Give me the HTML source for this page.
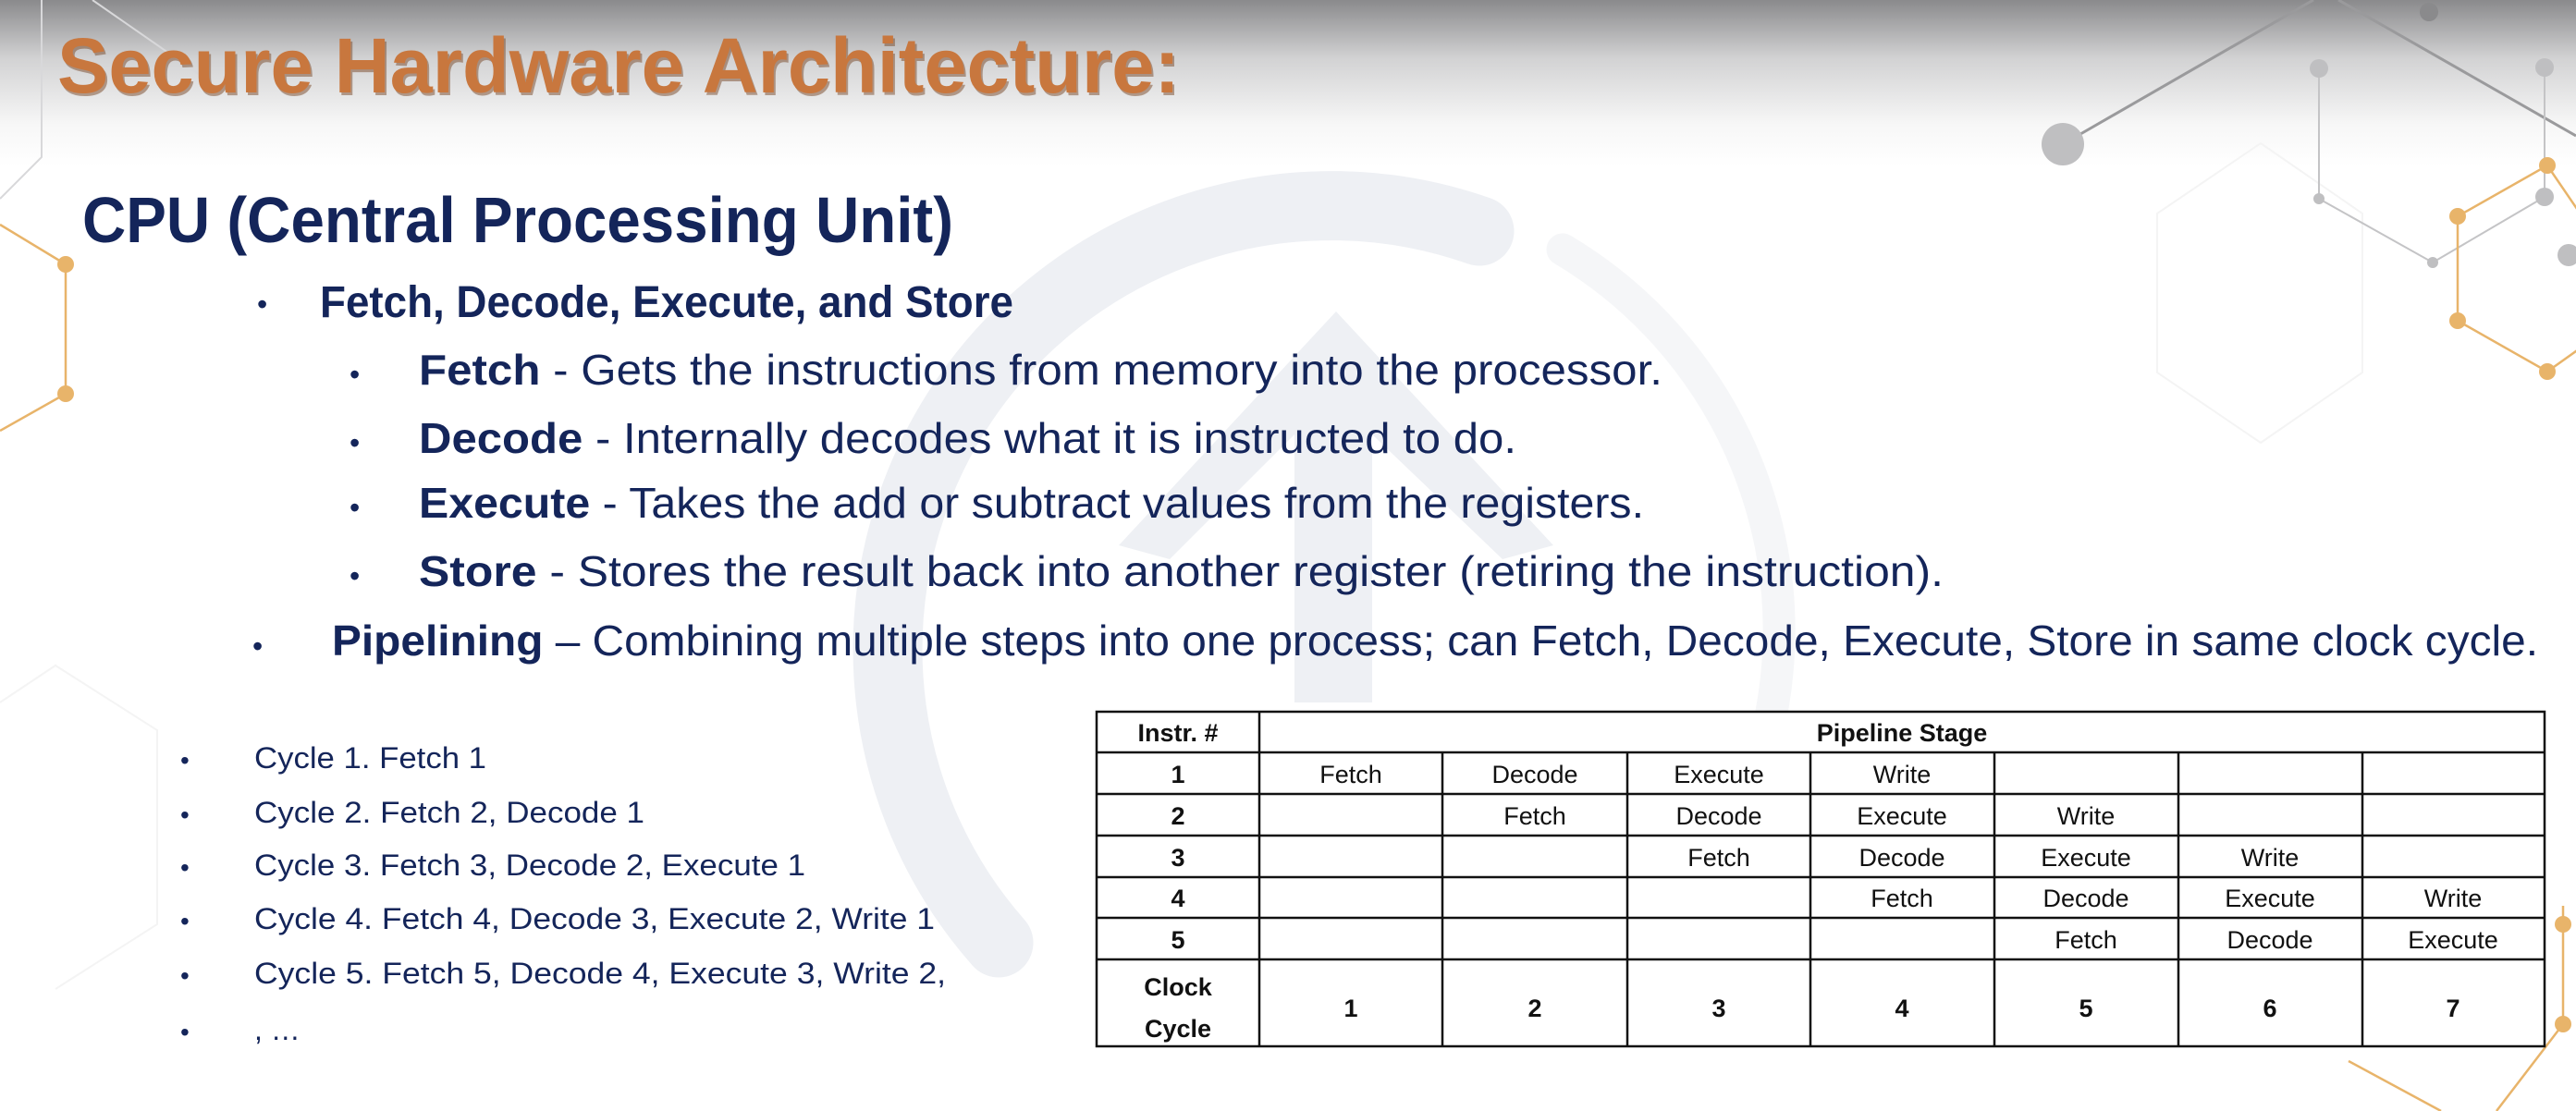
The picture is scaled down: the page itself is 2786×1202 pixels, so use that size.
<!DOCTYPE html>
<html><head><meta charset="utf-8"><style>
html,body{margin:0;padding:0;background:#fff;}
svg{display:block;}
text{font-family:"Liberation Sans",sans-serif;}
</style></head><body>
<svg width="2786" height="1202" viewBox="0 0 2786 1202" xmlns="http://www.w3.org/2000/svg">
<defs>
<linearGradient id="tg" x1="0" y1="0" x2="0" y2="1">
<stop offset="0" stop-color="#8a8a8c"/>
<stop offset="0.35" stop-color="#d2d2d3"/>
<stop offset="0.75" stop-color="#f7f7f7"/>
<stop offset="1" stop-color="#ffffff"/>
</linearGradient>
</defs>
<rect width="2786" height="1202" fill="#fff"/>
<rect width="2786" height="180" fill="url(#tg)"/>

<!-- watermark -->
<g fill="none" stroke="#eef0f4" stroke-linecap="round">
<path d="M1080 1020 A480 480 0 0 1 1600 250" stroke-width="75"/>
<path d="M1690 270 A480 480 0 0 1 1890 860" stroke-width="35" opacity="0.6"/>
</g>
<g fill="#eef0f4">
<polygon points="1445,337 1210,590 1265,605 1400,470 1400,760 1484,760 1484,470 1625,605 1680,590"/>
</g>

<!-- faint hexes -->
<g stroke="#f4f4f4" stroke-width="2" fill="none">
<path d="M2333 231 L2445 155 L2555 231 L2555 403 L2445 479 L2333 403 Z"/>
<path d="M0 760 L60 720 L170 790 L170 1000 L60 1070"/>
</g>

<!-- right top network -->
<g stroke="#9a9a9c" stroke-width="3" fill="none">
<line x1="2231" y1="156" x2="2502" y2="0"/>
<line x1="2529" y1="0" x2="2786" y2="147"/>
</g>
<g stroke="#c4c4c6" stroke-width="2" fill="none">
<polyline points="2508,74 2508,215 2631,284 2752,213 2752,73"/>
</g>
<g fill="#bfbfc1">
<circle cx="2231" cy="156" r="23"/>
<circle cx="2508" cy="74" r="10"/>
<circle cx="2752" cy="73" r="10"/>
<circle cx="2508" cy="215" r="6"/>
<circle cx="2631" cy="284" r="6"/>
<circle cx="2752" cy="213" r="10"/>
<circle cx="2778" cy="276" r="12"/>
<circle cx="2627" cy="13" r="10" fill="#8a8a8c"/>
</g>
<g stroke="#e8b46a" stroke-width="2.5" fill="none">
<polyline points="2800,245 2755,179 2658,234 2658,347 2755,402 2800,370"/>
<polyline points="0,243 71,286 71,426 0,466"/>
<polyline points="2772,980 2772,1108 2700,1202"/>
<polyline points="2540,1148 2640,1202"/>
</g>
<g fill="#e8b46a">
<circle cx="2755" cy="179" r="9"/><circle cx="2658" cy="234" r="9"/>
<circle cx="2658" cy="347" r="9"/><circle cx="2755" cy="402" r="9"/>
<circle cx="71" cy="286" r="9"/><circle cx="71" cy="426" r="9"/>
<circle cx="2772" cy="1000" r="9"/><circle cx="2772" cy="1108" r="9"/>
</g>
<g stroke="#d8d8da" stroke-width="2" fill="none">
<polyline points="45,0 45,170 0,215"/>
<polyline points="100,0 215,80"/>
</g>

<!-- Title -->
<text x="64" y="103" font-size="84" font-weight="bold" fill="#7a4a2a" opacity="0.5" textLength="1214" lengthAdjust="spacingAndGlyphs">Secure Hardware Architecture:</text>
<text x="62" y="100" font-size="84" font-weight="bold" fill="#c8773e" textLength="1214" lengthAdjust="spacingAndGlyphs">Secure Hardware Architecture:</text>

<g fill="#14255a">
<text x="89" y="262" font-size="70" font-weight="bold" textLength="942" lengthAdjust="spacingAndGlyphs">CPU (Central Processing Unit)</text>
<text x="278" y="340" font-size="32">•</text>
<text x="346" y="343" font-size="48" font-weight="bold" textLength="750" lengthAdjust="spacingAndGlyphs">Fetch, Decode, Execute, and Store</text>

<text x="378" y="416" font-size="32">•</text>
<text x="453" y="416" font-size="46" textLength="1345" lengthAdjust="spacingAndGlyphs"><tspan font-weight="bold">Fetch</tspan> - Gets the instructions from memory into the processor.</text>
<text x="378" y="490" font-size="32">•</text>
<text x="453" y="490" font-size="46" textLength="1187" lengthAdjust="spacingAndGlyphs"><tspan font-weight="bold">Decode</tspan> - Internally decodes what it is instructed to do.</text>
<text x="378" y="560" font-size="32">•</text>
<text x="453" y="560" font-size="46" textLength="1325" lengthAdjust="spacingAndGlyphs"><tspan font-weight="bold">Execute</tspan> - Takes the add or subtract values from the registers.</text>
<text x="378" y="634" font-size="32">•</text>
<text x="453" y="634" font-size="46" textLength="1649" lengthAdjust="spacingAndGlyphs"><tspan font-weight="bold">Store</tspan> -  Stores the result back into another register (retiring the instruction).</text>
<text x="273" y="710" font-size="32">•</text>
<text x="359" y="709" font-size="46" textLength="2386" lengthAdjust="spacingAndGlyphs"><tspan font-weight="bold">Pipelining</tspan> – Combining multiple steps into one process; can Fetch, Decode, Execute, Store in same clock cycle.</text>

<g font-size="32">
<text x="195" y="832" font-size="28">•</text>
<text x="275" y="831" textLength="251" lengthAdjust="spacingAndGlyphs">Cycle 1. Fetch 1</text>
<text x="195" y="891" font-size="28">•</text>
<text x="275" y="890" textLength="422" lengthAdjust="spacingAndGlyphs">Cycle 2. Fetch 2, Decode 1</text>
<text x="195" y="948" font-size="28">•</text>
<text x="275" y="947" textLength="596" lengthAdjust="spacingAndGlyphs">Cycle 3. Fetch 3, Decode 2, Execute 1</text>
<text x="195" y="1006" font-size="28">•</text>
<text x="275" y="1005" textLength="736" lengthAdjust="spacingAndGlyphs">Cycle 4. Fetch 4, Decode 3, Execute 2, Write 1</text>
<text x="195" y="1065" font-size="28">•</text>
<text x="275" y="1064" textLength="748" lengthAdjust="spacingAndGlyphs">Cycle 5. Fetch 5, Decode 4, Execute 3, Write 2,</text>
<text x="195" y="1126" font-size="28">•</text>
<text x="275" y="1125">, …</text>
</g>
</g>

<!-- Table -->
<rect x="1186" y="770" width="1566" height="362" fill="#fff"/>
<g stroke="#111" stroke-width="2.5" fill="none">
<rect x="1186" y="770" width="1566" height="362"/>
<line x1="1186" y1="814" x2="2752" y2="814"/>
<line x1="1186" y1="859" x2="2752" y2="859"/>
<line x1="1186" y1="904" x2="2752" y2="904"/>
<line x1="1186" y1="949" x2="2752" y2="949"/>
<line x1="1186" y1="993" x2="2752" y2="993"/>
<line x1="1186" y1="1038" x2="2752" y2="1038"/>
<line x1="1362" y1="770" x2="1362" y2="1132"/>
<line x1="1560" y1="814" x2="1560" y2="1132"/>
<line x1="1760" y1="814" x2="1760" y2="1132"/>
<line x1="1958" y1="814" x2="1958" y2="1132"/>
<line x1="2157" y1="814" x2="2157" y2="1132"/>
<line x1="2356" y1="814" x2="2356" y2="1132"/>
<line x1="2555" y1="814" x2="2555" y2="1132"/>
</g>
<g fill="#111" font-size="27" text-anchor="middle">
<g font-weight="bold">
<text x="1274" y="802">Instr. #</text>
<text x="2057" y="802">Pipeline Stage</text>
<text x="1274" y="847">1</text><text x="1274" y="892">2</text><text x="1274" y="937">3</text>
<text x="1274" y="981">4</text><text x="1274" y="1026">5</text>
<text x="1274" y="1077">Clock</text><text x="1274" y="1122">Cycle</text>
<text x="1461" y="1100">1</text><text x="1660" y="1100">2</text><text x="1859" y="1100">3</text>
<text x="2057" y="1100">4</text><text x="2256" y="1100">5</text><text x="2455" y="1100">6</text><text x="2653" y="1100">7</text>
</g>
<text x="1461" y="847">Fetch</text><text x="1660" y="847">Decode</text><text x="1859" y="847">Execute</text><text x="2057" y="847">Write</text>
<text x="1660" y="892">Fetch</text><text x="1859" y="892">Decode</text><text x="2057" y="892">Execute</text><text x="2256" y="892">Write</text>
<text x="1859" y="937">Fetch</text><text x="2057" y="937">Decode</text><text x="2256" y="937">Execute</text><text x="2455" y="937">Write</text>
<text x="2057" y="981">Fetch</text><text x="2256" y="981">Decode</text><text x="2455" y="981">Execute</text><text x="2653" y="981">Write</text>
<text x="2256" y="1026">Fetch</text><text x="2455" y="1026">Decode</text><text x="2653" y="1026">Execute</text>
</g>
</svg>
</body></html>
